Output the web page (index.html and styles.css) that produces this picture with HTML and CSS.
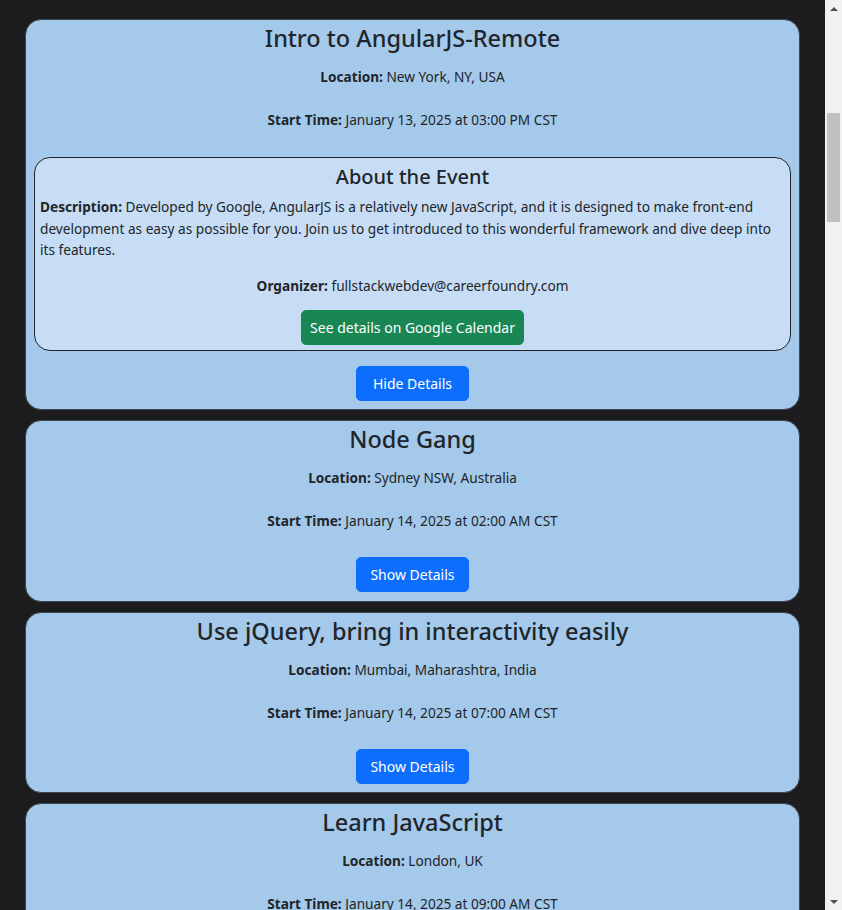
FILE: index.html
```html
<!DOCTYPE html>
<html lang="en">
<head>
<meta charset="utf-8">
<title>Meet App</title>
<link rel="stylesheet" href="styles.css">
</head>
<body>
<div class="viewport">
<main class="event-list">
  <section class="event">
    <h2 class="event-title">Intro to AngularJS-Remote</h2>
    <p class="event-info"><b>Location:</b> New York, NY, USA</p>
    <p class="event-info event-time"><b>Start Time:</b> January 13, 2025 at 03:00 PM CST</p>
    <div class="details">
      <h4 class="details-title">About the Event</h4>
      <p class="details-desc"><b>Description:</b> Developed by Google, AngularJS is a relatively new JavaScript, and it is designed to make front-end development as easy as possible for you. Join us to get introduced to this wonderful framework and dive deep into its features.</p>
      <p class="details-org"><b>Organizer:</b> fullstackwebdev@careerfoundry.com</p>
      <a class="btn btn-green">See details on Google Calendar</a>
    </div>
    <button class="btn btn-blue btn-after">Hide Details</button>
  </section>
  <section class="event">
    <h2 class="event-title">Node Gang</h2>
    <p class="event-info"><b>Location:</b> Sydney NSW, Australia</p>
    <p class="event-info event-time"><b>Start Time:</b> January 14, 2025 at 02:00 AM CST</p>
    <button class="btn btn-blue">Show Details</button>
  </section>
  <section class="event">
    <h2 class="event-title">Use jQuery, bring in interactivity easily</h2>
    <p class="event-info"><b>Location:</b> Mumbai, Maharashtra, India</p>
    <p class="event-info event-time"><b>Start Time:</b> January 14, 2025 at 07:00 AM CST</p>
    <button class="btn btn-blue">Show Details</button>
  </section>
  <section class="event">
    <h2 class="event-title">Learn JavaScript</h2>
    <p class="event-info"><b>Location:</b> London, UK</p>
    <p class="event-info event-time"><b>Start Time:</b> January 14, 2025 at 09:00 AM CST</p>
    <button class="btn btn-blue">Show Details</button>
  </section>
</main>
</div>
<div class="scrollbar" aria-hidden="true">
  <span class="sb-arrow sb-up"></span>
  <div class="sb-track"><div class="sb-thumb"></div></div>
  <span class="sb-arrow sb-down"></span>
</div>
</body>
</html>
```
FILE: styles.css
```css
html, body {
  margin: 0;
  padding: 0;
  background: #1c1b1d;
}
body {
  display: flex;
  height: 100vh;
  overflow: hidden;
  font-family: "Noto Sans", "Open Sans", sans-serif;
  font-size: 13.65px;
  color: #212529;
}
.viewport {
  flex: 1;
  min-width: 0;
  overflow: hidden;
}
.event-list {
  display: flex;
  flex-direction: column;
  gap: 10px;
  padding: 19px 25px 20px;
}
.event {
  display: flex;
  flex-direction: column;
  align-items: center;
  background: #a5c9eb;
  border: 1px solid #3b4653;
  border-radius: 16px;
  padding: 3px 8px 8.5px;
  text-align: center;
}
.event-title {
  margin: 0 0 12px;
  font-size: 23.5px;
  line-height: 31px;
  font-weight: 500;
}
.event-info {
  margin: 0;
  line-height: 21px;
}
.event-time {
  margin-top: 22px;
  margin-bottom: 26px;
}
b { font-weight: 700; }
.details {
  align-self: stretch;
  display: flex;
  flex-direction: column;
  align-items: center;
  margin-top: 1px;
  background: #c6ddf5;
  border: 1px solid #212529;
  border-radius: 16px;
  padding: 6px 5px 5px;
}
.details-title {
  margin: 0 0 6px;
  font-size: 20px;
  line-height: 26px;
  font-weight: 500;
}
.details-desc {
  margin: 0;
  text-align: left;
  align-self: stretch;
  line-height: 21.5px;
}
.details-org {
  margin: 14px 0 14px;
  line-height: 21px;
}
.btn {
  display: inline-block;
  font-family: inherit;
  font-size: 14px;
  line-height: 21px;
  padding: 6px 12px;
  border: 1px solid transparent;
  border-radius: 5px;
  color: #fff;
  cursor: pointer;
}
.btn-blue {
  background: #0d6efd;
  border-color: #0d6efd;
  padding: 6px 13px;
  min-width: 113px;
}
.btn-green {
  background: #198754;
  border-color: #198754;
  padding: 6px 8.5px;
}
.btn-after {
  margin-top: 15px;
}
.scrollbar {
  width: 17px;
  flex: none;
  display: flex;
  flex-direction: column;
  background: #f1f1f1;
}
.sb-arrow {
  height: 17px;
  flex: none;
  display: flex;
  align-items: center;
  justify-content: center;
}
.sb-arrow::before {
  content: "";
  width: 0;
  height: 0;
  border-left: 4px solid transparent;
  border-right: 4px solid transparent;
}
.sb-up::before { border-bottom: 4px solid #505050; }
.sb-down::before { border-top: 4px solid #505050; }
.sb-track {
  flex: 1;
  padding: 0 2px;
}
.sb-thumb {
  margin-top: 96px;
  height: 109px;
  background: #c1c1c1;
}
```
